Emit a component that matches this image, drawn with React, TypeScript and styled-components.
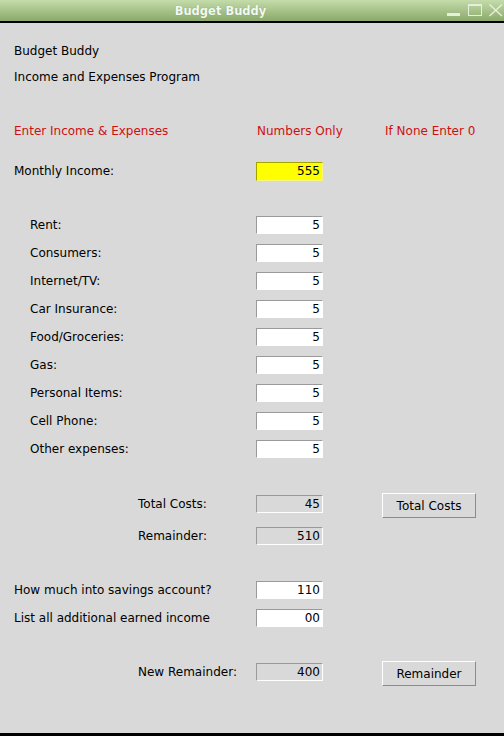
import React from "react";
import styled, { createGlobalStyle } from "styled-components";

const Global = createGlobalStyle`
  html, body { margin: 0; padding: 0; background: #d9d9d9; overflow: hidden; }
  * { box-sizing: border-box; }
`;

const Window = styled.div`
  width: 504px;
  height: 736px;
  display: flex;
  flex-direction: column;
  font-family: "DejaVu Sans", sans-serif;
  font-size: 12px;
  color: #000;
`;

const TitleBar = styled.div`
  height: 23px;
  flex: none;
  display: flex;
  align-items: stretch;
  background: linear-gradient(#c4dcaa, #8aa96a);
  border-bottom: 2px solid #000;
`;

const Title = styled.div`
  flex: 1;
  display: flex;
  align-items: center;
  justify-content: center;
  font-weight: bold;
  font-size: 11.5px;
  color: #f2f8f4;
  text-shadow: 0 0 1px rgba(60, 90, 40, 0.4);
`;

const WinButtons = styled.div`
  width: 63px;
  display: flex;
  align-items: center;
  gap: 7px;
  padding-left: 6px;
`;

const Body = styled.div`
  flex: 1;
  display: flex;
  flex-direction: column;
  background: #d9d9d9;
  border-bottom: 3px solid #000;
  padding-left: 14px;
`;

const Row = styled.div<{ $top?: number; $h?: number }>`
  display: flex;
  align-items: center;
  height: ${(p) => p.$h ?? 28}px;
  margin-top: ${(p) => p.$top ?? 0}px;
`;

const Label = styled.div<{ $indent?: number; $w?: number }>`
  width: ${(p) => p.$w ?? 242}px;
  padding-left: ${(p) => p.$indent ?? 0}px;
  flex: none;
  white-space: nowrap;
`;

const Header = styled.div<{ $w?: number }>`
  width: ${(p) => (p.$w ? p.$w + "px" : "auto")};
  flex: none;
  color: #cd1010;
  white-space: nowrap;
`;

const Entry = styled.div<{ $variant?: "normal" | "highlight" | "readonly" }>`
  width: 67px;
  height: ${(p) => (p.$variant === "highlight" ? 19 : 18)}px;
  flex: none;
  display: flex;
  align-items: center;
  justify-content: flex-end;
  padding-right: 2px;
  background: ${(p) =>
    p.$variant === "highlight" ? "#ffff00" : p.$variant === "readonly" ? "#d9d9d9" : "#ffffff"};
  border-style: solid;
  border-width: 1px;
  border-color: ${(p) =>
    p.$variant === "highlight"
      ? "#a3a300 #f5f580 #f5f580 #a3a300"
      : "#9a9a9a #ffffff #ffffff #9a9a9a"};
`;

const Button = styled.div`
  width: 94px;
  height: 25px;
  margin-left: 59px;
  margin-top: 3px;
  flex: none;
  display: flex;
  align-items: center;
  justify-content: center;
  background: #d9d9d9;
  border-style: solid;
  border-width: 1px;
  border-color: #ffffff #8a8a8a #8a8a8a #ffffff;
`;

const expenses = [
  "Rent:",
  "Consumers:",
  "Internet/TV:",
  "Car Insurance:",
  "Food/Groceries:",
  "Gas:",
  "Personal Items:",
  "Cell Phone:",
  "Other expenses:",
];

const WinIcon = ({ kind }: { kind: "min" | "max" | "close" }) => (
  <svg width="14" height="14" viewBox="0 0 14 14">
    {kind === "min" && <rect x="0" y="9" width="13" height="3" fill="#e6efdd" />}
    {kind === "max" && (
      <>
        <rect x="0.5" y="0.5" width="13" height="11" fill="none" stroke="#e6efdd" />
        <rect x="0" y="0" width="14" height="2" fill="#e6efdd" />
      </>
    )}
    {kind === "close" && (
      <path d="M0.5 0.5 L13 12 M13 0.5 L0.5 12" stroke="#e6efdd" strokeWidth="1.4" fill="none" />
    )}
  </svg>
);

export default function App() {
  return (
    <>
      <Global />
      <Window>
        <TitleBar>
          <Title>Budget Buddy</Title>
          <WinButtons>
            <WinIcon kind="min" />
            <WinIcon kind="max" />
            <WinIcon kind="close" />
          </WinButtons>
        </TitleBar>
        <Body>
          <Row $top={15} $h={26}>
            <Label>Budget Buddy</Label>
          </Row>
          <Row $h={26}>
            <Label>Income and Expenses Program</Label>
          </Row>
          <Row $top={28} $h={26}>
            <Header $w={243}>Enter Income &amp; Expenses</Header>
            <Header $w={128}>Numbers Only</Header>
            <Header>If None Enter 0</Header>
          </Row>
          <Row $top={13}>
            <Label>Monthly Income:</Label>
            <Entry $variant="highlight">555</Entry>
          </Row>
          <Row $top={26}>
            <Label $indent={16}>{expenses[0]}</Label>
            <Entry>5</Entry>
          </Row>
          {expenses.slice(1).map((e) => (
            <Row key={e}>
              <Label $indent={16}>{e}</Label>
              <Entry>5</Entry>
            </Row>
          ))}
          <Row $top={25} $h={32}>
            <Label $indent={124}>Total Costs:</Label>
            <Entry $variant="readonly">45</Entry>
            <Button>Total Costs</Button>
          </Row>
          <Row $h={32}>
            <Label $indent={124}>Remainder:</Label>
            <Entry $variant="readonly">510</Entry>
          </Row>
          <Row $top={24}>
            <Label>How much into savings account?</Label>
            <Entry>110</Entry>
          </Row>
          <Row>
            <Label>List all additional earned income</Label>
            <Entry>00</Entry>
          </Row>
          <Row $top={24} $h={32}>
            <Label $indent={124}>New Remainder:</Label>
            <Entry $variant="readonly">400</Entry>
            <Button>Remainder</Button>
          </Row>
        </Body>
      </Window>
    </>
  );
}
